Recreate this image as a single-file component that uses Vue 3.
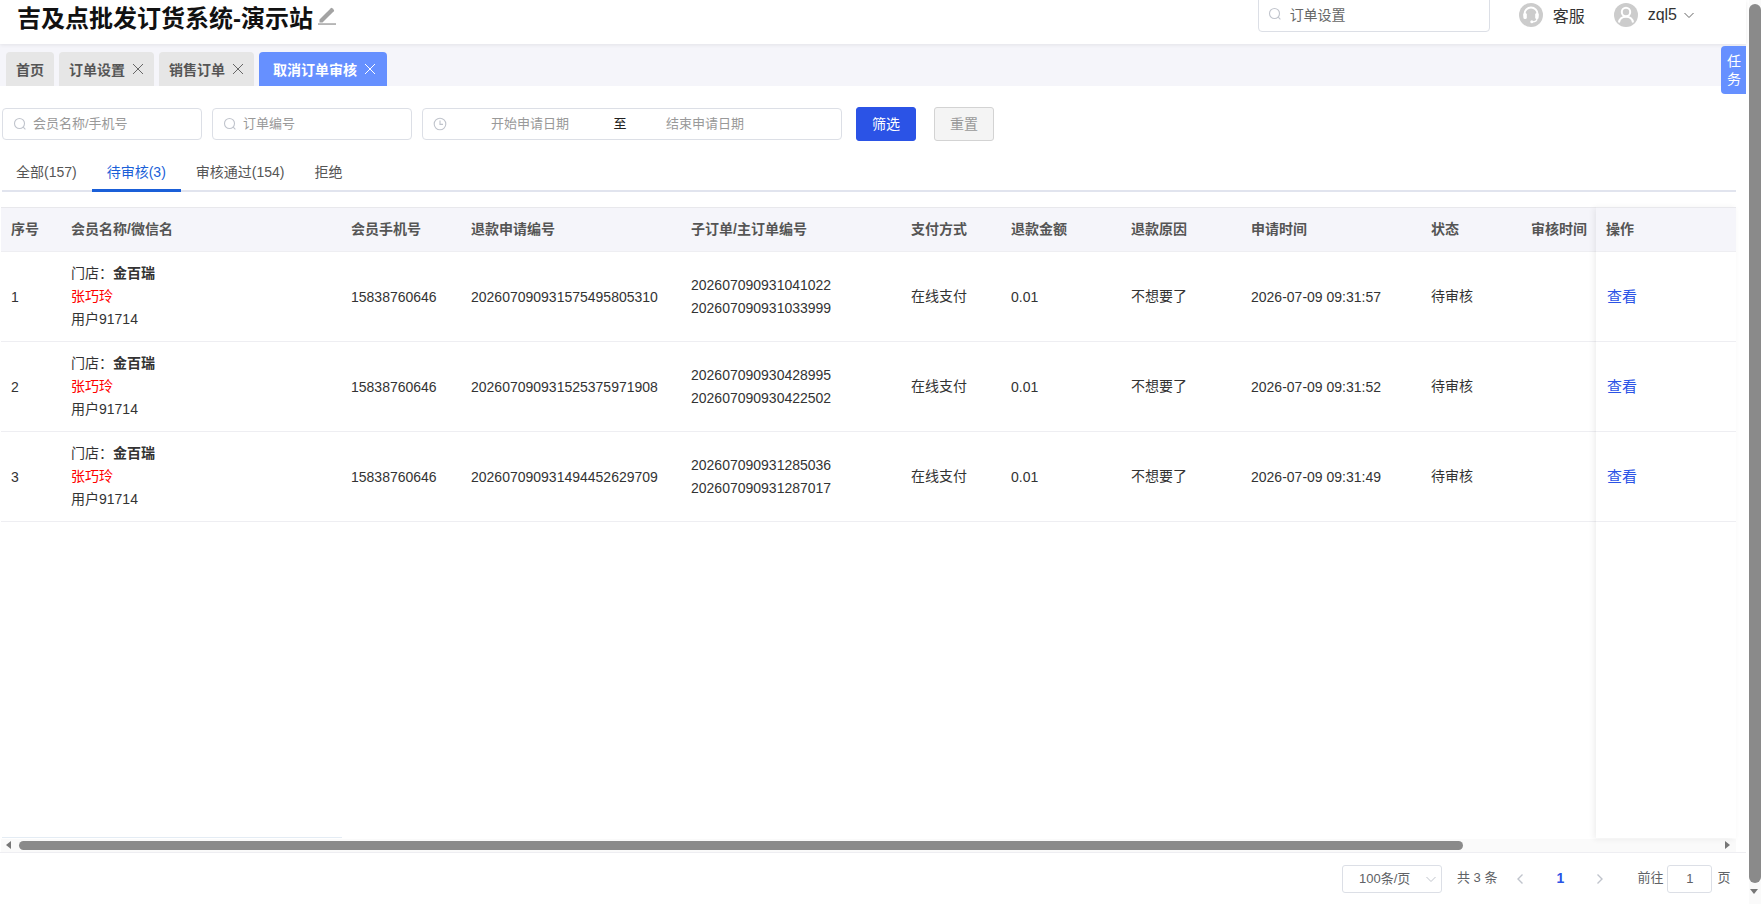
<script setup>
const pageTabs = [
  { name: '首页', closable: false },
  { name: '订单设置', closable: true },
  { name: '销售订单', closable: true },
  { name: '取消订单审核', closable: true, active: true }
]

const statusTabs = [
  { name: '全部(157)' },
  { name: '待审核(3)', active: true },
  { name: '审核通过(154)' },
  { name: '拒绝' }
]

const columns = [
  { title: '序号', width: 60 },
  { title: '会员名称/微信名', width: 280 },
  { title: '会员手机号', width: 120 },
  { title: '退款申请编号', width: 220 },
  { title: '子订单/主订单编号', width: 220 },
  { title: '支付方式', width: 100 },
  { title: '退款金额', width: 120 },
  { title: '退款原因', width: 120 },
  { title: '申请时间', width: 180 },
  { title: '状态', width: 100 },
  { title: '审核时间', width: 340 }
]

const rows = [
  {
    no: 1,
    refund: '202607090931575495805310',
    child: '202607090931041022',
    parent: '202607090931033999',
    time: '2026-07-09 09:31:57'
  },
  {
    no: 2,
    refund: '202607090931525375971908',
    child: '202607090930428995',
    parent: '202607090930422502',
    time: '2026-07-09 09:31:52'
  },
  {
    no: 3,
    refund: '202607090931494452629709',
    child: '202607090931285036',
    parent: '202607090931287017',
    time: '2026-07-09 09:31:49'
  }
]
</script>

<template>
  <div class="page">
    <div class="main">
      <header class="topbar">
        <div class="brand">
          <h1>吉及点批发订货系统-演示站</h1>
          <svg class="edit-icon" viewBox="0 0 20 20" width="20" height="20">
            <path d="M2.500 14.500 13.800 3.200a1.100 1.100 0 0 1 1.500 0l1.500 1.500a1.100 1.100 0 0 1 0 1.500L5.500 17.500h-3z" fill="#a3a3a3" />
            <rect x="1" y="18.300" width="18" height="1.500" fill="#a3a3a3" />
          </svg>
        </div>
        <div class="top-right">
          <div class="top-search">
            <svg class="search-icon" viewBox="0 0 14 14" width="14" height="14">
              <circle cx="6.500" cy="6.500" r="5" fill="none" stroke="#c0c4cc" stroke-width="1.100" />
              <path d="M10.200 10.200 12.400 12.400" stroke="#c0c4cc" stroke-width="1.100" />
            </svg>
            <span>订单设置</span>
          </div>
          <div class="top-item service">
            <span class="avatar">
              <svg viewBox="0 0 24 24" width="24" height="24">
                <path d="M5.500 13.500V11a6.500 6.500 0 0 1 13 0v2.500" fill="none" stroke="#fff" stroke-width="2" />
                <rect x="4.400" y="10" width="3.400" height="6" rx="1.500" fill="#fff" />
                <rect x="16.200" y="10" width="3.400" height="6" rx="1.500" fill="#fff" />
                <path d="M18 15.500c0 2.300-2 3.300-4.500 3.300" fill="none" stroke="#fff" stroke-width="1.300" />
                <circle cx="12.800" cy="18.800" r="1.500" fill="#fff" />
              </svg>
            </span>
            <span>客服</span>
          </div>
          <div class="top-item user">
            <span class="avatar">
              <svg viewBox="0 0 24 24" width="24" height="24">
                <circle cx="12" cy="9" r="4.200" fill="none" stroke="#fff" stroke-width="2" />
                <path d="M5 19.500c.5-3.800 3.400-5.800 7-5.800s6.500 2 7 5.800" fill="none" stroke="#fff" stroke-width="2" />
              </svg>
            </span>
            <span class="user-name">zql5</span>
            <svg viewBox="0 0 12 12" width="12" height="12">
              <path d="M1.500 4 6 8.500 10.500 4" fill="none" stroke="#666" stroke-width="1" />
            </svg>
          </div>
        </div>
      </header>

      <nav class="page-tabs">
        <div
          v-for="tab in pageTabs"
          :key="tab.name"
          class="page-tab"
          :class="{ active: tab.active }"
        >
          <span>{{ tab.name }}</span>
          <svg v-if="tab.closable" viewBox="0 0 12 12" width="12" height="12">
            <path d="M1 1 11 11M11 1 1 11" stroke="currentColor" stroke-width="1" fill="none" />
          </svg>
        </div>
      </nav>
      <div class="task-tag">任务</div>

      <section class="filters">
        <div class="field">
          <svg viewBox="0 0 14 14" width="14" height="14">
            <circle cx="6.500" cy="6.500" r="5" fill="none" stroke="#c0c4cc" stroke-width="1.100" />
            <path d="M10.200 10.200 12.400 12.400" stroke="#c0c4cc" stroke-width="1.100" />
          </svg>
          <span>会员名称/手机号</span>
        </div>
        <div class="field">
          <svg viewBox="0 0 14 14" width="14" height="14">
            <circle cx="6.500" cy="6.500" r="5" fill="none" stroke="#c0c4cc" stroke-width="1.100" />
            <path d="M10.200 10.200 12.400 12.400" stroke="#c0c4cc" stroke-width="1.100" />
          </svg>
          <span>订单编号</span>
        </div>
        <div class="field date-range">
          <svg viewBox="0 0 14 14" width="14" height="14">
            <circle cx="7" cy="7" r="5.800" fill="none" stroke="#c0c4cc" stroke-width="1.100" />
            <path d="M7 3.500V7.400H10" fill="none" stroke="#c0c4cc" stroke-width="1.100" />
          </svg>
          <span class="date-start">开始申请日期</span>
          <span class="date-sep">至</span>
          <span class="date-end">结束申请日期</span>
        </div>
        <button class="btn primary">筛选</button>
        <button class="btn plain">重置</button>
      </section>

      <div class="status-tabs">
        <div
          v-for="tab in statusTabs"
          :key="tab.name"
          class="status-tab"
          :class="{ active: tab.active }"
        >
          {{ tab.name }}
        </div>
      </div>

      <section class="table-wrap">
        <div class="table-scroll">
          <table class="data-table">
            <colgroup>
              <col v-for="c in columns" :key="c.title" :style="{ width: c.width + 'px' }" />
            </colgroup>
            <thead>
              <tr>
                <th v-for="c in columns" :key="c.title">{{ c.title }}</th>
              </tr>
            </thead>
            <tbody>
              <tr v-for="row in rows" :key="row.no">
                <td>{{ row.no }}</td>
                <td class="lines">
                  <div>门店：<b>金百瑞</b></div>
                  <div class="red">张巧玲</div>
                  <div>用户91714</div>
                </td>
                <td>15838760646</td>
                <td>{{ row.refund }}</td>
                <td class="lines">
                  <div>{{ row.child }}</div>
                  <div>{{ row.parent }}</div>
                </td>
                <td class="cjk">在线支付</td>
                <td>0.01</td>
                <td class="cjk">不想要了</td>
                <td>{{ row.time }}</td>
                <td class="cjk">待审核</td>
                <td></td>
              </tr>
            </tbody>
          </table>
        </div>
        <div class="fixed-col">
          <div class="fixed-head">操作</div>
          <div v-for="row in rows" :key="row.no" class="fixed-cell">
            <a class="link">查看</a>
          </div>
        </div>
        <div class="table-foot"></div>
      </section>

      <div class="h-scroll">
        <span class="arrow-left"></span>
        <div class="h-thumb"></div>
        <span class="arrow-right"></span>
      </div>

      <footer class="pager">
        <div class="page-size">
          <span>100条/页</span>
          <svg viewBox="0 0 12 12" width="12" height="12">
            <path d="M1.500 4 6 8.500 10.500 4" fill="none" stroke="#c0c4cc" stroke-width="1" />
          </svg>
        </div>
        <span class="total">共 3 条</span>
        <svg class="pg-arrow" viewBox="0 0 10 12" width="10" height="12">
          <path d="M7.500 1.500 3 6l4.500 4.500" fill="none" stroke="#c0c4cc" stroke-width="1.400" />
        </svg>
        <span class="pg-current">1</span>
        <svg class="pg-arrow" viewBox="0 0 10 12" width="10" height="12">
          <path d="M2.500 1.500 7 6l-4.500 4.500" fill="none" stroke="#c0c4cc" stroke-width="1.400" />
        </svg>
        <span class="goto">前往</span>
        <div class="goto-box">1</div>
        <span class="goto-unit">页</span>
      </footer>
    </div>

    <aside class="v-scroll">
      <div class="v-thumb"></div>
      <span class="arrow-down"></span>
    </aside>
  </div>
</template>

<style>
html,
body {
  margin: 0;
  overflow: hidden;
}
</style>

<style scoped>
.page {
  display: flex;
  width: 1761px;
  height: 904px;
  overflow: hidden;
  position: relative;
  background: #fff;
  color: #333;
  font-family: "Liberation Sans", "Noto Sans CJK SC", sans-serif;
  font-size: 14px;
}

.main {
  width: 1746px;
  flex: none;
  display: flex;
  flex-direction: column;
}

/* 顶部栏 */
.topbar {
  height: 44px;
  flex: none;
  display: flex;
  justify-content: space-between;
  padding-right: 51px;
  background: #fff;
  box-shadow: 0 1px 4px rgba(0, 0, 0, 0.08);
  position: relative;
  z-index: 1;
}

.brand {
  display: flex;
  align-items: center;
  height: 32px;
  padding-left: 17px;
}

.brand h1 {
  margin: 0;
  font-size: 24px;
  font-weight: 700;
  color: #111;
}

.edit-icon {
  margin: -3px 0 0 4px;
}

.top-right {
  display: flex;
  align-items: flex-start;
}

.top-search {
  width: 232px;
  height: 36px;
  margin-top: -4px;
  box-sizing: border-box;
  display: flex;
  align-items: center;
  gap: 8px;
  padding-left: 9px;
  border: 1px solid #dcdfe6;
  border-radius: 4px;
  color: #666;
}

.top-item {
  display: flex;
  align-items: center;
  height: 30px;
  color: #333;
  font-size: 16px;
}

.service {
  margin-left: 29px;
  gap: 10px;
}

.user {
  margin-left: 29px;
  gap: 10px;
}

.user-name {
  font-size: 16px;
  margin-right: -4px;
}

.avatar {
  width: 24px;
  height: 24px;
  border-radius: 50%;
  background: #ccc;
  display: block;
}

.avatar svg {
  display: block;
}

/* 页签 */
.page-tabs {
  height: 42px;
  flex: none;
  box-sizing: border-box;
  display: flex;
  align-items: flex-end;
  gap: 5px;
  padding-left: 6px;
  background: #f5f5fa;
}

.page-tab {
  height: 34px;
  display: flex;
  align-items: center;
  gap: 7px;
  padding: 0 10px;
  background: #e6e6e6;
  border-radius: 4px 4px 0 0;
  font-weight: 700;
  color: #555;
}

.page-tab svg {
  font-weight: 400;
  color: #666;
}

.page-tab.active {
  padding: 0 11px 0 14px;
  background: #6690ff;
  color: #fff;
}

.page-tab.active svg {
  color: #fff;
}

.task-tag {
  position: absolute;
  top: 46px;
  left: 1721px;
  width: 25px;
  height: 48px;
  box-sizing: border-box;
  padding: 6px 6px 0;
  border-radius: 4px 0 0 4px;
  background: #6690ff;
  color: #fff;
  font-size: 14px;
  line-height: 18px;
  z-index: 2;
}

/* 筛选 */
.filters {
  display: flex;
  align-items: center;
  height: 34px;
  margin-top: 21px;
  padding-left: 2px;
}

.field {
  width: 200px;
  height: 32px;
  box-sizing: border-box;
  display: flex;
  align-items: center;
  gap: 6px;
  padding: 0 0 3px 10px;
  margin-right: 10px;
  border: 1px solid #dcdfe6;
  border-radius: 4px;
  font-size: 13px;
  color: #999;
}

.field svg {
  margin-top: 3px;
}

.date-range {
  width: 420px;
  gap: 0;
  margin-right: 14px;
}

.date-start {
  width: 166px;
  text-align: center;
}

.date-end {
  width: 156px;
  text-align: center;
}

.date-sep {
  width: 14px;
  text-align: center;
  color: #222;
}

.btn {
  width: 60px;
  height: 34px;
  box-sizing: border-box;
  border-radius: 3px;
  font-family: inherit;
  font-size: 14px;
  padding: 0 0 2px;
}

.btn.primary {
  border: 1px solid #2b53e6;
  background: #2b53e6;
  color: #fff;
}

.btn.plain {
  margin-left: 18px;
  border: 1px solid #d3d3d3;
  background: #f4f4f4;
  color: #999;
}

/* 状态页签 */
.status-tabs {
  display: flex;
  height: 36px;
  flex: none;
  box-sizing: border-box;
  margin: 15px 10px 0 2px;
  border-bottom: 2px solid #e1e4ee;
}

.status-tab {
  padding: 0 15px;
  margin-left: -1px;
  margin-right: 1px;
  height: 36px;
  box-sizing: border-box;
  line-height: 33px;
  font-size: 14px;
  color: #555;
}

.status-tab.active {
  color: #1a5fd8;
  border-bottom: 3px solid #1a5fd8;
}

/* 表格 */
.table-wrap {
  position: relative;
  height: 631px;
  flex: none;
  margin: 15px 10px 0 1px;
}

.table-scroll {
  height: 100%;
  overflow: hidden;
}

.data-table {
  width: 1860px;
  table-layout: fixed;
  border-collapse: collapse;
}

.data-table th {
  height: 44px;
  padding: 0 10px 4px;
  box-sizing: border-box;
  background: #f5f5fa;
  border-top: 1px solid #e8e8ec;
  border-bottom: 1px solid #eeeef2;
  text-align: left;
  font-weight: 700;
  color: #555;
  white-space: nowrap;
}

.data-table td {
  height: 90px;
  padding: 0 10px;
  box-sizing: border-box;
  border-bottom: 1px solid #eeeef2;
  color: #333;
  white-space: nowrap;
}

.data-table td.cjk {
  padding-bottom: 4px;
}

.lines {
  line-height: 23px;
}

.red {
  color: #f00;
}

.fixed-col {
  position: absolute;
  top: 0;
  right: 0;
  bottom: 0;
  width: 140px;
  background: #fff;
  box-shadow: -2px 1px 6px rgba(0, 0, 0, 0.07);
  z-index: 1;
}

.fixed-head {
  height: 45px;
  box-sizing: border-box;
  padding-left: 10px;
  line-height: 43px;
  background: #f5f5fa;
  border-top: 1px solid #e8e8ec;
  border-bottom: 1px solid #eeeef2;
  font-weight: 700;
  color: #555;
}

.fixed-cell {
  height: 90px;
  box-sizing: border-box;
  padding-left: 11px;
  line-height: 89px;
  border-bottom: 1px solid #eeeef2;
}

.link {
  color: #2b53e6;
  font-size: 15px;
}

.table-foot {
  position: absolute;
  left: 1px;
  bottom: 0;
  width: 340px;
  height: 1px;
  background: #e4ecf4;
}

/* 横向滚动条 */
.h-scroll {
  display: flex;
  align-items: center;
  height: 13px;
  flex: none;
  margin: 1px 10px 0 1px;
  background: #fafafa;
  position: relative;
}

.h-thumb {
  position: absolute;
  left: 18px;
  top: 2px;
  width: 1444px;
  height: 9px;
  border-radius: 5px;
  background: #8a8a8a;
}

.arrow-left {
  position: absolute;
  left: 5px;
  top: 2px;
  border-style: solid;
  border-width: 4.500px 5px 4.500px 0;
  border-color: transparent #777 transparent transparent;
}

.arrow-right {
  position: absolute;
  right: 6px;
  top: 2px;
  border-style: solid;
  border-width: 4.500px 0 4.500px 5px;
  border-color: transparent transparent transparent #777;
}

/* 分页 */
.pager {
  flex: 1;
  display: flex;
  align-items: flex-start;
  padding: 12px 0 0 1342px;
  border-top: 1px solid #eeeef2;
  font-size: 13px;
  color: #606266;
}

.page-size {
  width: 100px;
  height: 28px;
  box-sizing: border-box;
  display: flex;
  align-items: center;
  gap: 15px;
  padding: 0 0 3px 16px;
  border: 1px solid #dcdfe6;
  border-radius: 3px;
}

.page-size svg {
  margin-top: 3px;
}

.total {
  margin-left: 15px;
  line-height: 25px;
}

.pg-arrow {
  margin: 8px 0 0 18px;
}

.pg-current {
  width: 10px;
  margin-left: 31px;
  line-height: 27px;
  font-size: 14px;
  font-weight: 700;
  color: #2b53e6;
}

.pg-current + .pg-arrow {
  margin-left: 29px;
}

.goto {
  margin-left: 32px;
  line-height: 25px;
}

.goto-box {
  width: 45px;
  height: 28px;
  box-sizing: border-box;
  margin-left: 4px;
  text-align: center;
  line-height: 26px;
  border: 1px solid #dcdfe6;
  border-radius: 3px;
}

.goto-unit {
  margin-left: 5px;
  line-height: 25px;
}

/* 页面滚动条 */
.v-scroll {
  flex: 1;
  margin-left: 3px;
  background: #fafafa;
  position: relative;
}

.v-thumb {
  position: absolute;
  top: 4px;
  left: 0;
  width: 12px;
  height: 879px;
  border-radius: 6px;
  background: #8a8a8a;
}

.arrow-down {
  position: absolute;
  top: 889px;
  left: 1px;
  border-style: solid;
  border-width: 5px 4.500px 0;
  border-color: #777 transparent transparent;
}
</style>
